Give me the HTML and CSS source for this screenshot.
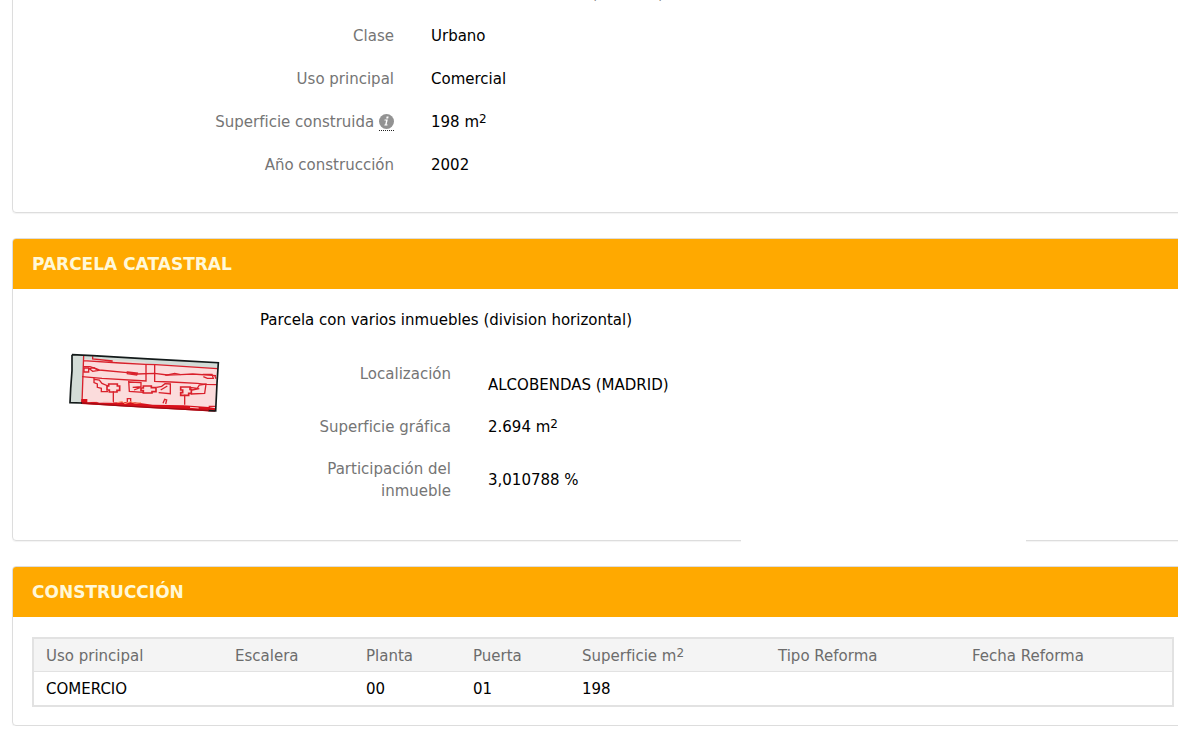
FILE: index.html
```html
<!DOCTYPE html>
<html lang="es">
<head>
  <meta charset="UTF-8">
  <meta name="viewport" content="width=device-width, initial-scale=1.0">
  <title>Datos catastrales</title>
  <link rel="stylesheet" href="styles.css">
</head>
<body>
  <main class="contenido">

    <section class="panel inmueble">
      <dl class="datos">
        <dd class="solo">28100 ALCOBENDAS (MADRID)</dd>
        <dt>Clase</dt>
        <dd>Urbano</dd>
        <dt>Uso principal</dt>
        <dd>Comercial</dd>
        <dt>Superficie construida <span class="info"><svg viewBox="0 0 15 15" width="15" height="15" aria-hidden="true"><circle cx="7.5" cy="7.5" r="7.5" fill="#929292"/><path d="M7.6 2.6h2l-.4 1.9h-2zM5.6 5.6h3.2l-1.2 5h1l-.2 1H5.3l.2-1h.7l.9-4H5.4z" fill="#fff"/></svg></span></dt>
        <dd>198 m<sup>2</sup></dd>
        <dt>Año construcción</dt>
        <dd>2002</dd>
      </dl>
    </section>

    <section class="panel parcela">
      <h2>PARCELA CATASTRAL</h2>
      <div class="cuerpo">
        <!-- croquis de la parcela -->
        <svg class="croquis" viewBox="24 36 456 180" width="152" height="60" role="img" aria-label="Croquis de la parcela">
          <path d="M36 44L98 47 475 68 467 213 30 189z" fill="#d3dcd7"/>
          <path d="M70 58L160 64 256 71 287 73 472 86 467 211 65 189z" fill="#fbdcdc"/>
          <path d="M98 54L150 60 255 66 260 76 180 70 98 62z" fill="#eadbd8"/>
          <g fill="none" stroke="#d9202b" stroke-width="4">
            <path d="M71 46L66 188M70 62L180 69 256 73 287 74 472 86M98 49v8l60 6"/>
            <path d="M70 80h20l28 10 84 8 30 4 52-2 38 5 40-1 36-2 70 5"/>
            <path d="M66 110l60 5 132 8V73M284 73v51l50 2 78 4 26 3 32 1"/>
            <path d="M72 84h14v12H72zM88 86l14-3 14 8-18 3zM202 96l30 3-2 6-28-4zM316 106l28-6 18 4"/>
            <path d="M102 114v14l10 4v10l12 3v10h20M104 118l14 2 8 10 18 8M160 154v34"/>
            <path d="M206 122l2 32 42 3M208 126l35 2v12l-25 2M222 150l20-8M331 130v31l-35-3M290 142l15-3 10-8 16 1M302 150l20-12"/>
            <path d="M374 164v30M390 142l22 3 6-10 20-3-4 28-42 2M396 150l22-4"/>
            <path d="M146 132h26v6h7v13h-8v5h-23v-6h-7v-12h5zM250 138h24v5h14v12h-12v4h-26v-7h-7v-8h7zM362 141h28v7h4v12h-8v6h-24v-8h6v-8h-6z" stroke-width="5"/>
            <path d="M202 186v-10h10v10M309 190l5-12 6 2-3 12M428 103h28l4 12h-18l-12-5M464 106l4 10M448 212v-13h18"/>
          </g>
          <path d="M64 177h18v10l26-2 10 3 100-2 60 8 92 2 76 5 20 4-1 10-140-8-262-15z" fill="#d8101b"/>
          <path d="M172 188l14-4 9 7 16-6 15 5 17-2" fill="none" stroke="#ff9a6e" stroke-width="3"/>
          <path d="M90 183l20 2M130 185l30 2M390 202l26 2" stroke="#fbcaca" stroke-width="3"/>
          <path d="M36 44L98 47l152 9 110 6 115 6-4 62-4 83-22-1M66 189l-36-1 2-42 4-54V44" fill="none" stroke="#131a1a" stroke-width="5"/>
          <path d="M66 189l110 8 100 6 170 9" fill="none" stroke="#a00b14" stroke-width="4"/>
        </svg>
        <div class="detalle">
          <p>Parcela con varios inmuebles (division horizontal)</p>
          <dl class="datos">
            <dt>Localización</dt>
            <dd class="lugar">ALCOBENDAS (MADRID)</dd>
            <dt>Superficie gráfica</dt>
            <dd>2.694 m<sup>2</sup></dd>
            <dt>Participación del inmueble</dt>
            <dd>3,010788 %</dd>
          </dl>
        </div>
      </div>
    </section>

    <section class="panel construccion">
      <h2>CONSTRUCCIÓN</h2>
      <table>
        <colgroup>
          <col class="c-uso">
          <col class="c-escalera">
          <col class="c-planta">
          <col class="c-puerta">
          <col class="c-superficie">
          <col class="c-tipo">
          <col>
        </colgroup>
        <thead>
          <tr>
            <th>Uso principal</th>
            <th>Escalera</th>
            <th>Planta</th>
            <th>Puerta</th>
            <th>Superficie m<sup>2</sup></th>
            <th>Tipo Reforma</th>
            <th>Fecha Reforma</th>
          </tr>
        </thead>
        <tbody>
          <tr>
            <td>COMERCIO</td>
            <td></td>
            <td>00</td>
            <td>01</td>
            <td>198</td>
            <td></td>
            <td></td>
          </tr>
        </tbody>
      </table>
    </section>

  </main>
</body>
</html>
```
FILE: styles.css
```css
* {
  box-sizing: border-box;
}
body {
  margin: 0;
  background: #fff;
  color: #000;
  font-family: Verdana, "DejaVu Sans", sans-serif;
  font-size: 15px;
  line-height: 22px;
  overflow: hidden;
}
.contenido {
  display: flex;
  flex-direction: column;
  gap: 25px;
  margin: -19px -16px 0 12px;
}
.panel {
  position: relative;
  border: 1px solid #ddd;
  border-radius: 4px;
  box-shadow: 0 1px 1px rgba(0, 0, 0, 0.05);
}
h2 {
  margin: 0;
  padding: 14px 19px;
  border-radius: 3px 3px 0 0;
  background: #ffa900;
  color: #fff8d8;
  font-size: 17px;
  line-height: 22px;
}

/* listas etiqueta / valor */
.datos {
  display: grid;
  grid-template-columns: 191px 1fr;
  column-gap: 37px;
  row-gap: 20px;
  margin: 0;
}
dt {
  color: #757575;
  text-align: right;
}
dd {
  margin: 0;
  align-self: center;
}
.solo {
  grid-column: 2;
}
sup {
  font-size: 12px;
  line-height: 0;
  vertical-align: 4px;
}
.info {
  display: inline-block;
  height: 17px;
  border-bottom: 1px dotted #222;
  vertical-align: middle;
}
.info svg {
  display: block;
}
.inmueble .datos {
  grid-template-columns: 381px 1fr;
  row-gap: 21px;
  padding-bottom: 36px;
}

/* parcela */
.cuerpo {
  display: flex;
  gap: 40px;
  padding: 20px 19px 38px 55px;
}
.croquis {
  flex: none;
  margin-top: 43px;
}
.detalle {
  flex: 1;
}
.detalle p {
  margin: 0 0 32px;
}
.lugar {
  padding-top: 11px;
}
.parcela::after {
  content: "";
  position: absolute;
  left: 728px;
  bottom: -3px;
  width: 285px;
  height: 4px;
  background: #fff;
}

/* construccion */
table {
  width: calc(100% - 38px);
  margin: 20px 19px 18px;
  border: 2px solid #e2e2e2;
  border-spacing: 0;
  table-layout: fixed;
}
th,
td {
  height: 33px;
  padding: 0 0 0 12px;
  text-align: left;
  font-weight: normal;
}
th {
  padding-top: 2px;
  background: #f4f4f4;
  border-bottom: 1px solid #e2e2e2;
  color: #6c6c6c;
}
.c-uso {
  width: 189px;
}
.c-escalera {
  width: 131px;
}
.c-planta {
  width: 107px;
}
.c-puerta {
  width: 109px;
}
.c-superficie {
  width: 196px;
}
.c-tipo {
  width: 194px;
}
```
